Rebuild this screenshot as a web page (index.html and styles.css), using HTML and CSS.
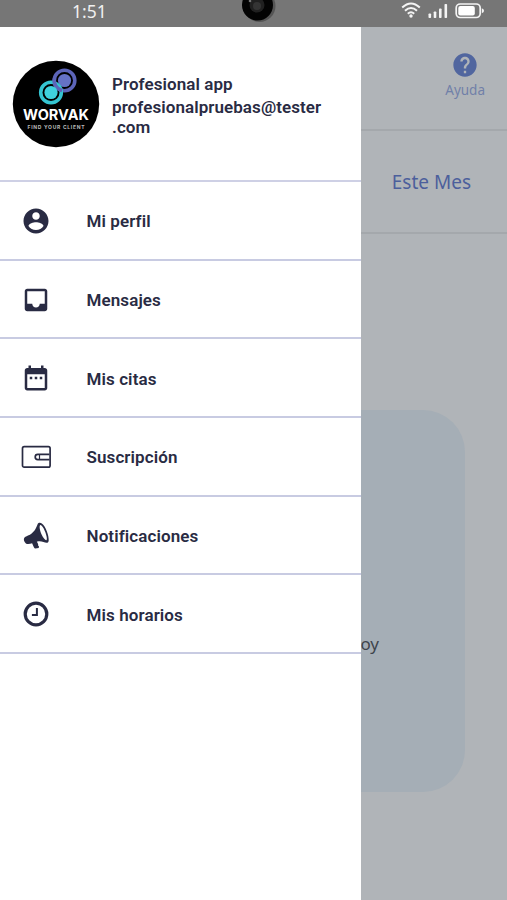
FILE: index.html
```
<!DOCTYPE html>
<html lang="es">
<head>
  <meta charset="UTF-8" />
  <meta name="viewport" content="width=device-width, initial-scale=1.0" />
  <title>Worvak</title>
  <link rel="stylesheet" href="styles.css">
</head>
<body>
  <header class="status">
    <span class="hora">1:51</span>
    <svg class="camara" width="34" height="24" viewBox="0 0 34 24">
      <circle cx="17.5" cy="6" r="16" fill="#555"/>
      <circle cx="15.5" cy="5" r="15.5" fill="#030303"/>
      <circle cx="15" cy="5" r="7.5" fill="#202020"/>
      <circle cx="15" cy="6" r="4" fill="#343434"/>
      <circle cx="8" cy="1" r="1.3" fill="#777"/>
    </svg>
    <svg class="indicadores" width="84" height="20" viewBox="0 0 84 20">
      <g fill="none" stroke="#f4f4f4" stroke-width="2">
        <path d="M1.2 7.6Q10 -.6 18.8 7.6"/>
        <path d="M4 10.8Q10 5.2 16 10.8"/>
        <path d="M6.8 13.8Q10 10.8 13.2 13.8"/>
      </g>
      <circle cx="10" cy="16" r="1.7" fill="#f4f4f4"/>
      <g fill="#f4f4f4">
        <rect x="27.5" y="13.5" width="2.6" height="4.5" rx=".8"/>
        <rect x="32.7" y="11.5" width="2.6" height="6.5" rx=".8"/>
        <rect x="38" y="8.5" width="2.6" height="9.5" rx=".8"/>
        <rect x="43.5" y="4" width="2.6" height="14" rx=".8"/>
      </g>
      <rect x="55.2" y="4" width="24" height="13.5" rx="4" fill="none" stroke="#f4f4f4" stroke-width="1.7"/>
      <rect x="57.3" y="6" width="16.5" height="9.5" rx="2" fill="#fff"/>
      <path d="M80.8 8.3q2.2.6 2.2 2.5t-2.2 2.5z" fill="#f4f4f4"/>
    </svg>
  </header>

  <div class="app">
    <main class="fondo">
      <div class="topbar">
        <div class="ayuda">
          <svg width="28" height="28" viewBox="0 0 24 24"><path fill="currentColor" d="M12 2C6.480 2 2 6.480 2 12s4.480 10 10 10 10-4.480 10-10S17.520 2 12 2zm1 17h-2v-2h2v2zm2.070-7.750l-.9.920C13.450 12.900 13 13.500 13 15h-2v-.5c0-1.100.45-2.100 1.170-2.830l1.240-1.260c.37-.36.590-.86.590-1.410 0-1.100-.9-2-2-2s-2 .9-2 2H8c0-2.210 1.790-4 4-4s4 1.790 4 4c0 .88-.36 1.680-.93 2.250z"/></svg>
          <span>Ayuda</span>
        </div>
      </div>
      <div class="tabs"><span>Este Mes</span></div>
      <div class="card"><span>Hoy</span></div>
    </main>

    <aside class="drawer">
      <div class="usuario">
        <svg class="avatar" width="88" height="88" viewBox="0 0 88 88">
          <circle cx="44" cy="44" r="43.2" fill="#000"/>
          <circle cx="52.5" cy="20.5" r="10.3" fill="none" stroke="#5c64b8" stroke-width="3.6"/>
          <circle cx="52.5" cy="20.5" r="6.6" fill="#6572c6"/>
          <circle cx="39" cy="32.5" r="10.3" fill="none" stroke="#35c5d2" stroke-width="3.6"/>
          <path d="M42.4 18.5A10.3 10.3 0 0 0 50 30.500" fill="none" stroke="#5c64b8" stroke-width="3.6"/>
          <circle cx="39" cy="32.5" r="6.6" fill="#3fd2de"/>
          <text class="marca" x="44" y="59.5" text-anchor="middle" textLength="66" lengthAdjust="spacingAndGlyphs">WORVAK</text>
          <text class="lema" x="44" y="69" text-anchor="middle" textLength="57" lengthAdjust="spacing">FIND YOUR CLIENT</text>
        </svg>
        <div class="datos">
          <div class="nombre">Profesional app</div>
          <div class="correo">profesionalpruebas@tester<br>.com</div>
        </div>
      </div>

      <nav class="menu">
        <a class="item">
          <svg viewBox="0 0 24 24"><path fill="currentColor" d="M12 2C6.480 2 2 6.480 2 12s4.480 10 10 10 10-4.480 10-10S17.520 2 12 2zm0 3c1.660 0 3 1.340 3 3s-1.340 3-3 3-3-1.340-3-3 1.340-3 3-3zm0 14.200c-2.500 0-4.710-1.280-6-3.220.03-1.990 4-3.080 6-3.080 1.990 0 5.970 1.090 6 3.080-1.290 1.940-3.500 3.220-6 3.220z"/></svg>
          <span>Mi perfil</span>
        </a>
        <a class="item">
          <svg viewBox="0 0 24 24"><path fill="currentColor" d="M19 3H4.990c-1.110 0-1.980.89-1.980 2L3 19c0 1.100.88 2 1.990 2H19c1.100 0 2-.9 2-2V5c0-1.110-.9-2-2-2zm0 12h-4c0 1.660-1.350 3-3 3s-3-1.340-3-3H4.990V5H19v10z"/></svg>
          <span>Mensajes</span>
        </a>
        <a class="item">
          <svg viewBox="0 0 24 24"><path fill="currentColor" d="M9 11H7v2h2v-2zm4 0h-2v2h2v-2zm4 0h-2v2h2v-2zm2-7h-1V2h-2v2H8V2H6v2H5c-1.110 0-1.990.9-1.990 2L3 20c0 1.100.89 2 2 2h14c1.100 0 2-.9 2-2V6c0-1.100-.9-2-2-2zm0 16H5V9h14v11z"/></svg>
          <span>Mis citas</span>
        </a>
        <a class="item">
          <svg viewBox="0 0 30 30"><g fill="none" stroke="currentColor" stroke-width="1.7"><rect x="1.5" y="4.7" width="27.6" height="20.5" rx="1.7"/><path d="M28.5 12.4H16.8a2.6 2.6 0 0 0 0 5.2h11.7"/><path d="M18.5 13v4" stroke-width="1.2"/></g></svg>
          <span>Suscripción</span>
        </a>
        <a class="item">
          <svg viewBox="0 1 30 30"><path fill="currentColor" fill-rule="evenodd" d="M17.600 3c.8-.5 2.200-.4 3.200.4 3.900 2.700 7.200 12 6.900 17-.1 1.500-.9 2.500-2.200 2.400-2-.2-5.100-2.200-8.900-1.400l-.8.200 1.400 2.600-.2 1.100 1 1.200-.3 1.500-3.400.5c-1-.1-1.700-1.600-3.200-5.300-2 .8-4.800 1.300-6.200.2C3.300 22.400 2.500 20 3 18.600c.4-1.400 2.200-2.100 4-3C12.800 13 15 8.500 16.500 4.400c.2-.6.600-1.100 1.100-1.400zM19.100 5.200c-1 1-.3 5 1.500 9.300 1.400 3.300 3.700 5.800 4.700 5.700 1.200-.3.400-5.100-1.500-9.300-1.500-3.500-3.700-6.500-4.700-5.700z"/></svg>
          <span>Notificaciones</span>
        </a>
        <a class="item">
          <svg viewBox="0 0 30 30"><circle cx="15" cy="15" r="10.8" fill="none" stroke="currentColor" stroke-width="3.2"/><path d="M15.9 9v6.900h-5" fill="none" stroke="currentColor" stroke-width="2"/></svg>
          <span>Mis horarios</span>
        </a>
      </nav>
    </aside>
  </div>
</body>
</html>
```
FILE: styles.css
```
* { box-sizing: border-box; margin: 0; padding: 0; }
body { width: 507px; height: 900px; display: flex; flex-direction: column; overflow: hidden; background: #b0b4b8; font-family: Roboto, "Liberation Sans", sans-serif; }

/* barra de estado */
.status { display: flex; align-items: flex-start; height: 27px; background: #767676; color: #f0f0f0; flex-shrink: 0; }
.hora { width: 171px; padding-left: 72px; font: 400 17.5px/22px "Noto Sans", sans-serif; }
.camara { margin-left: 71px; }
.indicadores { margin-left: 125px; }

.app { position: relative; flex: 1; }

/* pantalla detrás del menú */
.fondo { height: 100%; background: #b0b4b8; font-family: "Noto Sans", sans-serif; }
.topbar { height: 104px; border-bottom: 2px solid #a4a8ac; display: flex; justify-content: flex-end; padding: 24px 22px 0 0; }
.ayuda { display: flex; flex-direction: column; align-items: center; color: #51669f; }
.ayuda span { font-size: 13.5px; line-height: 20px; color: #7080a8; margin-top: 1px; }
.tabs { height: 103px; border-bottom: 2px solid #a4a8ac; display: flex; justify-content: flex-end; align-items: center; padding: 1px 36px 0 0; color: #4c5f9c; font-size: 19px; }
.card { width: 422px; height: 382px; margin: 176px 0 0 43px; border-radius: 42px; background: #a5aeb6; display: flex; align-items: flex-end; justify-content: flex-end; padding: 0 86px 136px 0; color: #3f454d; font-size: 17px; line-height: 24px; }

/* menú lateral */
.drawer { position: absolute; top: 0; left: 0; width: 361px; height: 100%; background: #fff; color: #292b43; }
.usuario { height: 155px; display: flex; align-items: flex-start; padding: 33px 0 0 12px; border-bottom: 2px solid #ced0e5; }
.avatar { flex-shrink: 0; }
.marca { fill: #fff; font: 700 14.5px Inter, sans-serif; }
.lema { fill: #bbb; font: 700 5px Inter, sans-serif; }
.datos { padding: 14px 0 0 12px; font-weight: 600; font-size: 17px; line-height: 20px; letter-spacing: 0.07px; }
.nombre { margin-bottom: 3px; }
.item { display: flex; align-items: center; height: 78.7px; padding: 1px 0 0 21px; border-bottom: 2px solid #c8cbe2; font-weight: 600; font-size: 17px; letter-spacing: 0.1px; }
.item svg { width: 30px; height: 30px; margin-right: 35.5px; flex-shrink: 0; }
.item span { padding-top: 1px; }
```
